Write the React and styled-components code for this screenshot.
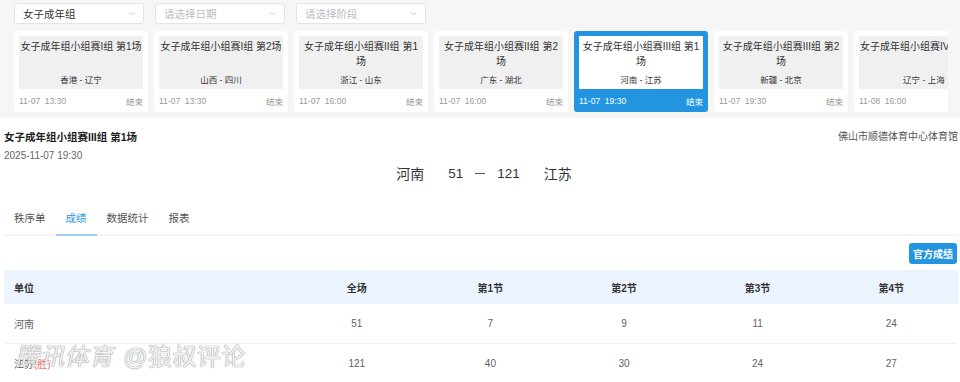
import React from "react";
import styled, { createGlobalStyle } from "styled-components";

const GlobalStyle = createGlobalStyle`
  * { box-sizing: border-box; }
  body {
    margin: 0;
    background: #fff;
    font-family: "Liberation Sans", "Noto Sans CJK SC", sans-serif;
    color: #333;
  }
`;

const Page = styled.div`
  width: 960px;
  height: 382px;
  overflow: hidden;
  position: relative;
`;

const TopPanel = styled.div`
  background: #f6f6f6;
  padding: 3px 12px 6px 14px;
  height: 118px;
`;

const Filters = styled.div`
  display: flex;
  gap: 11px;
`;

const Select = styled.div`
  width: 130px;
  height: 21px;
  background: #fff;
  border: 1px solid #e2e4e8;
  border-radius: 3px;
  display: flex;
  align-items: center;
  justify-content: space-between;
  padding: 0 8px 0 8px;
  font-size: 10.5px;
  color: ${({ placeholder }) => (placeholder ? "#b8bcc4" : "#333")};
`;

const Chevron = styled.svg`
  width: 7px;
  height: 5px;
`;

const CardRow = styled.div`
  display: flex;
  gap: 6px;
  margin-top: 7px;
  overflow: hidden;
`;

const Card = styled.div`
  flex: 0 0 134px;
  height: 81px;
  padding: 5px 5px 0;
  border-radius: 3px;
  background: ${({ active }) => (active ? "#2395e0" : "#fff")};
  display: flex;
  flex-direction: column;
`;

const CardBody = styled.div`
  height: 53px;
  background: ${({ active }) => (active ? "#fff" : "#f0f0f0")};
  display: flex;
  flex-direction: column;
  justify-content: space-between;
  padding: 3px 1px 3px;
  text-align: center;
`;

const CardTitle = styled.div`
  font-size: 10px;
  line-height: 15px;
  color: #333;
  white-space: ${({ nowrap }) => (nowrap ? "nowrap" : "normal")};
`;

const CardTeams = styled.div`
  font-size: 8.5px;
  line-height: 12px;
  color: #333;
`;

const CardFoot = styled.div`
  flex: 1;
  display: flex;
  align-items: center;
  justify-content: space-between;
  font-size: 8.5px;
  color: ${({ active }) => (active ? "#fff" : "#999")};
`;

const Main = styled.div`
  padding: 0 2px 0 4px;
`;

const MatchHead = styled.div`
  display: flex;
  justify-content: space-between;
  padding-top: 12px;
`;

const MatchTitle = styled.div`
  font-size: 10.5px;
  font-weight: bold;
  color: #222;
  line-height: 14px;
`;

const MatchDate = styled.div`
  font-size: 10px;
  color: #666;
  margin-top: 5px;
  line-height: 14px;
`;

const Venue = styled.div`
  font-size: 10px;
  color: #555;
  line-height: 14px;
`;

const Score = styled.div`
  display: flex;
  justify-content: center;
  align-items: center;
  gap: 24px;
  font-size: 14px;
  color: #333;
  margin-top: -1px;
  height: 22px;
  padding-left: 6px;
`;

const ScoreNum = styled.span`
  font-size: 13.5px;
`;

const Dash = styled.span`
  width: 10px;
  height: 1px;
  background: #555;
  margin: 0 -12px;
`;

const Tabs = styled.div`
  display: flex;
  margin-top: 17px;
  border-bottom: 2px solid #f2f4f8;
`;

const Tab = styled.div`
  padding: 0 10px;
  height: 35px;
  line-height: 34px;
  font-size: 10.5px;
  color: ${({ active }) => (active ? "#2b97e0" : "#555")};
  margin-bottom: -2px;
  border-bottom: 2px solid ${({ active }) => (active ? "#9ccff2" : "transparent")};
`;

const Toolbar = styled.div`
  display: flex;
  justify-content: flex-end;
  padding: 7px 1px 6px 0;
`;

const Button = styled.div`
  height: 21px;
  padding: 0 4px;
  background: #2395e0;
  color: #fff;
  font-size: 10px;
  font-weight: bold;
  border-radius: 3px;
  display: flex;
  align-items: center;
`;

const Table = styled.div`
  width: 100%;
`;

const Row = styled.div`
  display: grid;
  grid-template-columns: 286px repeat(5, 1fr);
  height: ${({ head }) => (head ? "34px" : "40px")};
  align-items: center;
  background: ${({ head }) => (head ? "#ebf4ff" : "#fff")};
  border-bottom: ${({ head }) => (head ? "none" : "1px solid #edf1f7")};
  font-size: 10px;
  font-weight: ${({ head }) => (head ? "bold" : "normal")};
  color: ${({ head }) => (head ? "#333" : "#606266")};
`;

const Cell = styled.div`
  text-align: ${({ left }) => (left ? "left" : "center")};
  padding-left: ${({ left }) => (left ? "10px" : "0")};
`;

const Win = styled.span`
  color: #f56c6c;
`;

const Watermark = styled.div`
  position: absolute;
  left: 18px;
  top: 337px;
  font-size: 24px;
  letter-spacing: 0.5px;
  color: rgba(255, 255, 255, 0.92);
  text-shadow: 0 0 1px #8a8a8a, 0 0 1px #8a8a8a;
  pointer-events: none;
`;

const Slant = styled.span`
  display: inline-block;
  transform: skewX(-12deg);
`;

const ArrowDown = () => (
  <Chevron viewBox="0 0 7 5">
    <path d="M0.5 1 L3.5 4 L6.5 1" fill="none" stroke="#c0c4cc" strokeWidth="0.8" />
  </Chevron>
);

const matches = [
  { title: "女子成年组小组赛I组 第1场", teams: "香港 - 辽宁", time: "11-07  13:30", status: "结束", nowrap: true },
  { title: "女子成年组小组赛I组 第2场", teams: "山西 - 四川", time: "11-07  13:30", status: "结束", nowrap: true },
  { title: "女子成年组小组赛II组 第1场", teams: "浙江 - 山东", time: "11-07  16:00", status: "结束" },
  { title: "女子成年组小组赛II组 第2场", teams: "广东 - 湖北", time: "11-07  16:00", status: "结束" },
  { title: "女子成年组小组赛III组 第1场", teams: "河南 - 江苏", time: "11-07  19:30", status: "结束", active: true },
  { title: "女子成年组小组赛III组 第2场", teams: "新疆 - 北京", time: "11-07  19:30", status: "结束" },
  { title: "女子成年组小组赛IV组 第1场", teams: "辽宁 - 上海", time: "11-08  16:00", status: "", nowrap: true },
];

const rows = [
  { team: "河南", win: false, scores: [51, 7, 9, 11, 24] },
  { team: "江苏", win: true, scores: [121, 40, 30, 24, 27] },
];

const App = () => {
  return (
    <Page>
      <GlobalStyle />
      <TopPanel>
        <Filters>
          <Select>
            女子成年组
            <ArrowDown />
          </Select>
          <Select placeholder>
            请选择日期
            <ArrowDown />
          </Select>
          <Select placeholder>
            请选择阶段
            <ArrowDown />
          </Select>
        </Filters>
        <CardRow>
          {matches.map((m) => (
            <Card key={m.title} active={m.active}>
              <CardBody active={m.active}>
                <CardTitle nowrap={m.nowrap}>{m.title}</CardTitle>
                <CardTeams>{m.teams}</CardTeams>
              </CardBody>
              <CardFoot active={m.active}>
                <span style={{ whiteSpace: "pre" }}>{m.time}</span>
                <span>{m.status}</span>
              </CardFoot>
            </Card>
          ))}
        </CardRow>
      </TopPanel>

      <Main>
        <MatchHead>
          <div>
            <MatchTitle>女子成年组小组赛III组 第1场</MatchTitle>
            <MatchDate>2025-11-07 19:30</MatchDate>
          </div>
          <Venue>佛山市顺德体育中心体育馆</Venue>
        </MatchHead>
        <Score>
          <span>河南</span>
          <ScoreNum>51</ScoreNum>
          <Dash />
          <ScoreNum>121</ScoreNum>
          <span>江苏</span>
        </Score>
        <Tabs>
          <Tab>秩序单</Tab>
          <Tab active>成绩</Tab>
          <Tab>数据统计</Tab>
          <Tab>报表</Tab>
        </Tabs>
        <Toolbar>
          <Button>官方成绩</Button>
        </Toolbar>
        <Table>
          <Row head>
            <Cell left>单位</Cell>
            <Cell>全场</Cell>
            <Cell>第1节</Cell>
            <Cell>第2节</Cell>
            <Cell>第3节</Cell>
            <Cell>第4节</Cell>
          </Row>
          {rows.map((r) => (
            <Row key={r.team}>
              <Cell left>
                {r.team}
                {r.win && <Win>(胜)</Win>}
              </Cell>
              {r.scores.map((s, i) => (
                <Cell key={i}>{s}</Cell>
              ))}
            </Row>
          ))}
        </Table>
      </Main>

      <Watermark>
        <Slant>腾讯体育</Slant> @狼叔评论
      </Watermark>
    </Page>
  );
};

export default App;
